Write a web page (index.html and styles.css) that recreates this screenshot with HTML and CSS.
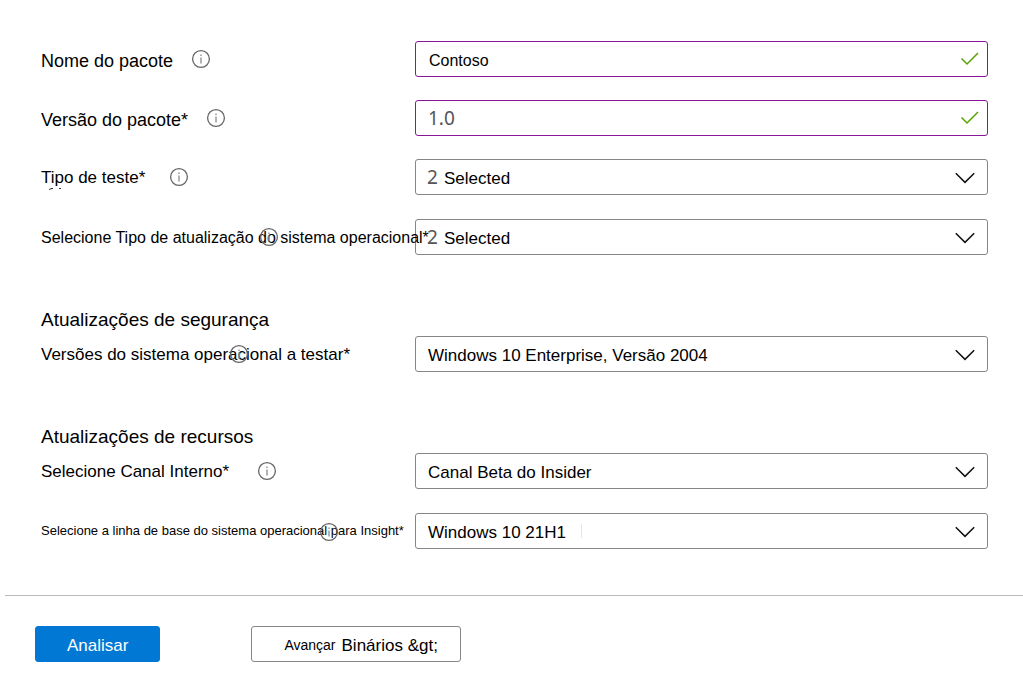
FILE: index.html
```html
<!DOCTYPE html>
<html lang="pt">
<head>
<meta charset="utf-8">
<meta name="viewport" content="width=device-width, initial-scale=1">
<title>Nome do pacote</title>
<link rel="stylesheet" href="styles.css">
</head>
<body>
<svg class="symbols" aria-hidden="true">
  <symbol id="info" viewBox="0 0 20 20"><circle cx="10" cy="10" r="8.4" fill="none" stroke="#666" stroke-width="1.3"/><path d="M10 5.5v1.6M10 8.4v6" stroke="#999" stroke-width="1.5"/></symbol>
  <symbol id="check" viewBox="0 0 20 14"><path d="M1.5 6.5L7 12L18 1" fill="none" stroke="#57a300" stroke-width="1.5"/></symbol>
  <symbol id="chevron" viewBox="0 0 20 12"><path d="M.8 1.2L10 10.4L19.2 1.2" fill="none" stroke="#111" stroke-width="1.5"/></symbol>
</svg>
<form class="form">
  <section class="rows package">
    <div class="row">
      <div class="caption large"><label for="name">Nome do pacote</label><svg class="info"><use href="#info"/></svg></div>
      <div class="field"><input id="name" class="control valid" type="text" value="Contoso"><svg class="check"><use href="#check"/></svg></div>
    </div>
    <div class="row">
      <div class="caption large"><label for="version">Versão do pacote*</label><svg class="info"><use href="#info"/></svg></div>
      <div class="field"><input id="version" class="control valid number" type="text" value="1.0"><svg class="check"><use href="#check"/></svg></div>
    </div>
    <div class="row">
      <div class="caption spaced"><label for="type">Tipo de teste*</label><svg class="info"><use href="#info"/></svg>
        <svg class="trace" viewBox="0 0 16 2" aria-hidden="true"><path d="M1 1.5L4 .5M11 .5h2M3 .5h2" stroke="#333" fill="none"/></svg></div>
      <div class="field"><select id="type" class="control counted"><option>Selected</option></select><span class="count">2</span><svg class="chevron"><use href="#chevron"/></svg></div>
    </div>
    <div class="row">
      <div class="caption medium"><label for="update">Selecione Tipo de atualização do sistema operacional*</label><svg class="info over over-update"><use href="#info"/></svg></div>
      <div class="field"><select id="update" class="control counted"><option>Selected</option></select><span class="count">2</span><svg class="chevron"><use href="#chevron"/></svg></div>
    </div>
  </section>

  <section class="updates">
    <h2>Atualizações de segurança</h2>
    <div class="rows">
      <div class="row">
        <div class="caption"><label for="os">Versões do sistema operacional a testar*</label><svg class="info over over-os"><use href="#info"/></svg></div>
        <div class="field"><select id="os" class="control"><option>Windows 10 Enterprise, Versão 2004</option></select><svg class="chevron"><use href="#chevron"/></svg></div>
      </div>
    </div>
  </section>

  <section class="updates">
    <h2>Atualizações de recursos</h2>
    <div class="rows wide">
      <div class="row">
        <div class="caption far"><label for="channel">Selecione Canal Interno*</label><svg class="info"><use href="#info"/></svg></div>
        <div class="field"><select id="channel" class="control"><option>Canal Beta do Insider</option></select><svg class="chevron"><use href="#chevron"/></svg></div>
      </div>
      <div class="row">
        <div class="caption small"><label for="baseline">Selecione a linha de base do sistema operacional para Insight*</label><svg class="info over over-baseline"><use href="#info"/></svg></div>
        <div class="field"><select id="baseline" class="control"><option>Windows 10 21H1</option></select><span class="caret"></span><svg class="chevron"><use href="#chevron"/></svg></div>
      </div>
    </div>
  </section>
</form>
<footer class="footer">
  <button class="button primary" type="button">Analisar</button>
  <button class="button next" type="button"><span class="next-word">Avançar</span><span>Binários &amp;gt;</span></button>
</footer>
</body>
</html>
```
FILE: styles.css
```css
* { box-sizing: border-box; }
body {
  margin: 0;
  background: #fff;
  color: #000;
  font: 17px/20px "Liberation Sans", Arial, sans-serif;
}
.symbols { position: absolute; width: 0; height: 0; }
.form { padding: 41px 35px 0 41px; }
.rows { display: grid; gap: 23px; }
.wide { gap: 24px; }
.package { margin-bottom: 52px; }
.package .row:last-child { margin-top: 1px; }
.updates { margin-bottom: 52px; }
.updates:last-child { margin-bottom: 46px; }
h2 { margin: 0 0 5px; padding-top: 2px; font-size: 19px; line-height: 22px; font-weight: 400; }
.row { display: grid; grid-template-columns: 374px minmax(0, 1fr); align-items: center; }
.caption {
  position: relative;
  z-index: 1;
  display: flex;
  align-items: center;
  gap: 20px;
  white-space: nowrap;
}
.caption label { padding-top: 2px; }
.large { gap: 18px; font-size: 18px; }
.large label { padding-top: 4px; }
.small label { padding-top: 0; }
.medium { font-size: 16px; }
.small { font-size: 13px; }
.spaced { gap: 24px; }
.far { gap: 28px; }
.info { flex: none; width: 20px; height: 20px; }
.over { position: absolute; top: 1px; }
.over-update { left: 218px; }
.over-os { left: 188px; }
.over-baseline { left: 278px; }
.trace { position: absolute; left: 7px; top: 22px; width: 16px; height: 2px; }
.field { display: grid; align-items: center; }
.field > * { grid-area: 1 / 1; }
.control {
  appearance: none;
  width: 100%;
  height: 36px;
  margin: 0;
  padding: 4px 48px 0 12px;
  border: 1px solid #868686;
  border-radius: 3px;
  background: #fff;
  color: #000;
  font: inherit;
}
.valid { padding: 3px 48px 0 13px; border-color: #881798; font-size: 16px; }
.number, .count { color: #555; font-family: "Noto Sans", sans-serif; font-size: 19px; }
.number { padding: 0 48px 0 12px; }
.counted { padding-left: 28px; }
.count { padding-left: 12px; pointer-events: none; }
.check, .chevron { justify-self: end; pointer-events: none; }
.check { width: 20px; height: 14px; margin-right: 8px; }
.chevron { width: 20px; height: 12px; margin: 2px 13px 0 0; }
.caret { width: 1px; height: 14px; margin-left: 166px; background: #e6e6e6; }
.footer {
  display: flex;
  gap: 91px;
  margin-left: 5px;
  padding: 30px;
  border-top: 1px solid #b8b8b8;
}
.button {
  display: flex;
  align-items: center;
  justify-content: center;
  height: 36px;
  border: 1px solid #868686;
  border-radius: 3px;
  background: #fff;
  color: #000;
  font: inherit;
  padding: 4px 31px 0;
}
.primary { background: #0078d4; border-color: #0078d4; color: #fff; }
.next { gap: 6px; padding: 4px 22px 0 32px; }
.next-word { padding-bottom: 2px; font-size: 14px; }
```
